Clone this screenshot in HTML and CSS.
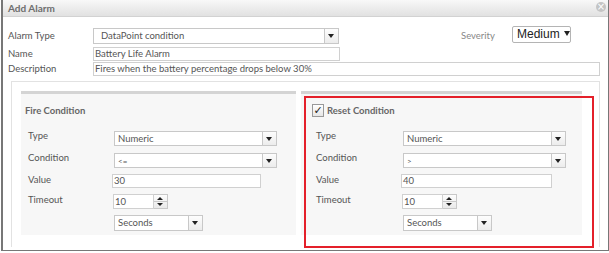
FILE: index.html
```html
<!DOCTYPE html>
<html lang="en">
<head>
    <meta charset="UTF-8">
    <title>Add Alarm</title>
    <link rel="stylesheet" href="styles.css">
</head>
<body>

<div class="dialog">
    <div class="titlebar">
        <span class="title">Add Alarm</span>
        <span class="close">&times;</span>
    </div>

    <div class="content">
        <!-- Alarm info -->
        <div class="row row-type">
            <span class="label">Alarm Type</span>
            <div class="select select-alarm">
                <span class="select-value">DataPoint condition</span>
                <span class="select-arrow"></span>
            </div>
            <span class="severity-label">Severity</span>
            <div class="severity">Medium<span class="tri"></span></div>
        </div>
        <div class="row">
            <span class="label">Name</span>
            <div class="input input-name">Battery Life Alarm</div>
        </div>
        <div class="row">
            <span class="label">Description</span>
            <div class="input input-desc">Fires when the battery percentage drops below 30%</div>
        </div>

        <!-- Conditions -->
        <div class="conditions">
            <div class="panel panel-fire">
                <div class="panel-title">Fire Condition</div>
                <div class="field">
                    <span class="field-label">Type</span>
                    <div class="select select-wide"><span class="select-value">Numeric</span><span class="select-arrow"></span></div>
                </div>
                <div class="field">
                    <span class="field-label">Condition</span>
                    <div class="select select-wide"><span class="select-value small">&lt;=</span><span class="select-arrow"></span></div>
                </div>
                <div class="field field-value">
                    <span class="field-label">Value</span>
                    <div class="input input-value">30</div>
                </div>
                <div class="field field-timeout">
                    <span class="field-label">Timeout</span>
                    <div class="spin">
                        <div class="input input-spin">10</div>
                        <div class="spin-btns"><span class="up"></span><span class="down"></span></div>
                    </div>
                </div>
                <div class="field field-unit">
                    <span class="field-label"></span>
                    <div class="select select-unit"><span class="select-value">Seconds</span><span class="select-arrow"></span></div>
                </div>
            </div>

            <div class="panel panel-reset">
                <div class="panel-title"><span class="check">&#10003;</span>Reset Condition</div>
                <div class="field">
                    <span class="field-label">Type</span>
                    <div class="select select-wide"><span class="select-value">Numeric</span><span class="select-arrow"></span></div>
                </div>
                <div class="field">
                    <span class="field-label">Condition</span>
                    <div class="select select-wide"><span class="select-value small">&gt;</span><span class="select-arrow"></span></div>
                </div>
                <div class="field field-value">
                    <span class="field-label">Value</span>
                    <div class="input input-value">40</div>
                </div>
                <div class="field field-timeout">
                    <span class="field-label">Timeout</span>
                    <div class="spin">
                        <div class="input input-spin">10</div>
                        <div class="spin-btns"><span class="up"></span><span class="down"></span></div>
                    </div>
                </div>
                <div class="field field-unit">
                    <span class="field-label"></span>
                    <div class="select select-unit"><span class="select-value">Seconds</span><span class="select-arrow"></span></div>
                </div>
                <div class="highlight"></div>
            </div>
        </div>
    </div>
</div>

</body>
</html>
```

FILE: styles.css
```css
* {
    box-sizing: border-box;
}
body {
    margin: 0;
    background-color: #fff;
    font-family: Lato, "Open Sans", sans-serif;
    font-size: 9.5px;
    color: #555;
}
.dialog {
    width: 608px;
    height: 251px;
    margin-left: 1px;
    border: 1px solid #777;
    border-left-width: 2px;
    border-top: none;
}
.titlebar {
    position: relative;
    height: 17px;
    line-height: 17px;
    padding-left: 5px;
    background: linear-gradient(#f8f8f8, #e1e1e1);
    border-bottom: 1px solid #d2d2d2;
}
.title {
    font-weight: bold;
    font-size: 10px;
    color: #6e6e6e;
}
.close {
    position: absolute;
    right: 2px;
    top: 2px;
    width: 10px;
    height: 10px;
    border-radius: 50%;
    background-color: #c4c4c4;
    color: #fff;
    font-size: 10px;
    line-height: 9px;
    text-align: center;
    font-family: "DejaVu Sans", sans-serif;
}
.content {
    padding: 10px 0 0 5px;
}
.row {
    display: flex;
    align-items: center;
    height: 15px;
}
.row-type {
    height: 17px;
    margin-bottom: 2px;
}
.label {
    width: 85px;
}
.select {
    display: flex;
    height: 15px;
    border: 1px solid #c8c8c8;
    background-color: #fff;
}
.select-value {
    flex: 1;
    padding-left: 3px;
    line-height: 13px;
    white-space: nowrap;
    overflow: hidden;
}
.select-alarm .select-value {
    padding-left: 7px;
}
.select-value.small {
    font-size: 8px;
    padding-top: 1px;
}
.select-arrow {
    position: relative;
    width: 14px;
    border-left: 1px solid #c8c8c8;
    background: linear-gradient(#fdfdfd, #ececec);
}
.select-arrow::after {
    content: "";
    position: absolute;
    left: 3px;
    top: 5px;
    border-left: 3px solid transparent;
    border-right: 3px solid transparent;
    border-top: 4px solid #222;
}
.select-alarm {
    width: 246px;
    height: 16px;
}
.severity-label {
    margin-left: 122px;
    width: 51px;
    color: #888;
}
.severity {
    width: 59px;
    height: 17px;
    margin-top: -2px;
    border: 1px solid #b4b4b4;
    border-radius: 2px;
    padding-left: 4px;
    font-family: "Liberation Sans", Arial, sans-serif;
    font-size: 12px;
    line-height: 15px;
    color: #222;
    background-color: #fff;
    white-space: nowrap;
}
.tri {
    display: inline-block;
    margin-left: 4px;
    vertical-align: 2px;
    border-left: 3px solid transparent;
    border-right: 3px solid transparent;
    border-top: 5px solid #222;
}
.input {
    height: 14px;
    border: 1px solid #d0d0d0;
    background-color: #fff;
    padding-left: 1px;
    line-height: 12px;
    white-space: nowrap;
}
.input-name {
    width: 247px;
}
.input-desc {
    width: 507px;
    margin-top: 1px;
}
.conditions {
    display: flex;
    width: 589px;
    height: 166px;
    margin: 5px 0 0 3px;
    padding: 9px 0 0 9px;
    border: 1px solid #e2e2e2;
    border-bottom: none;
}
.panel {
    position: relative;
    height: 144px;
    border-top: 3px solid #d4d4d4;
    background-color: #f7f7f7;
}
.panel-fire {
    width: 275px;
    padding-left: 4px;
}
.panel-reset {
    width: 281px;
    margin-left: 5px;
    padding-left: 11px;
}
.panel-title {
    display: flex;
    align-items: center;
    height: 30px;
    padding-top: 3px;
    padding-bottom: 1px;
    font-weight: bold;
    color: #666;
}
.check {
    width: 12px;
    height: 13px;
    margin-right: 3px;
    border: 1px solid #999;
    background: linear-gradient(#fff, #e6e6e6);
    color: #222;
    font-family: "DejaVu Sans", sans-serif;
    font-size: 11px;
    font-weight: bold;
    line-height: 11px;
    text-align: center;
}
.field {
    display: flex;
    align-items: flex-start;
    height: 22px;
    margin-top: 6px;
}
.field + .field {
    margin-top: 0;
}
.field-label {
    width: 89px;
    padding-left: 3px;
    line-height: 12px;
}
.panel-reset .field-label {
    width: 91px;
    padding-left: 4px;
}
.select-wide {
    width: 163px;
    margin-top: 1px;
}
.field-value {
    height: 20px;
}
.input-value {
    width: 149px;
    margin-left: -2px;
}
.panel-reset .input-value {
    width: 151px;
}
.field-timeout {
    height: 21px;
}
.spin {
    display: flex;
    margin-left: -1px;
}
.input-spin {
    width: 41px;
    height: 15px;
    line-height: 13px;
}
.spin-btns {
    display: flex;
    flex-direction: column;
    width: 14px;
    height: 15px;
    border: 1px solid #c8c8c8;
    border-left: none;
    background: linear-gradient(#fdfdfd, #e9e9e9);
}
.up, .down {
    flex: 1;
    position: relative;
}
.up {
    border-bottom: 1px solid #c8c8c8;
}
.up::after, .down::after {
    content: "";
    position: absolute;
    left: 3px;
    top: 2px;
    border-left: 3px solid transparent;
    border-right: 3px solid transparent;
}
.up::after {
    border-bottom: 3px solid #222;
}
.down::after {
    top: 1px;
    border-top: 3px solid #222;
}
.select-unit {
    width: 89px;
    height: 16px;
}
.select-unit .select-value {
    line-height: 14px;
}
.highlight {
    position: absolute;
    left: 3px;
    top: 2px;
    width: 290px;
    height: 152px;
    border: 2px solid #e4202a;
}
```
